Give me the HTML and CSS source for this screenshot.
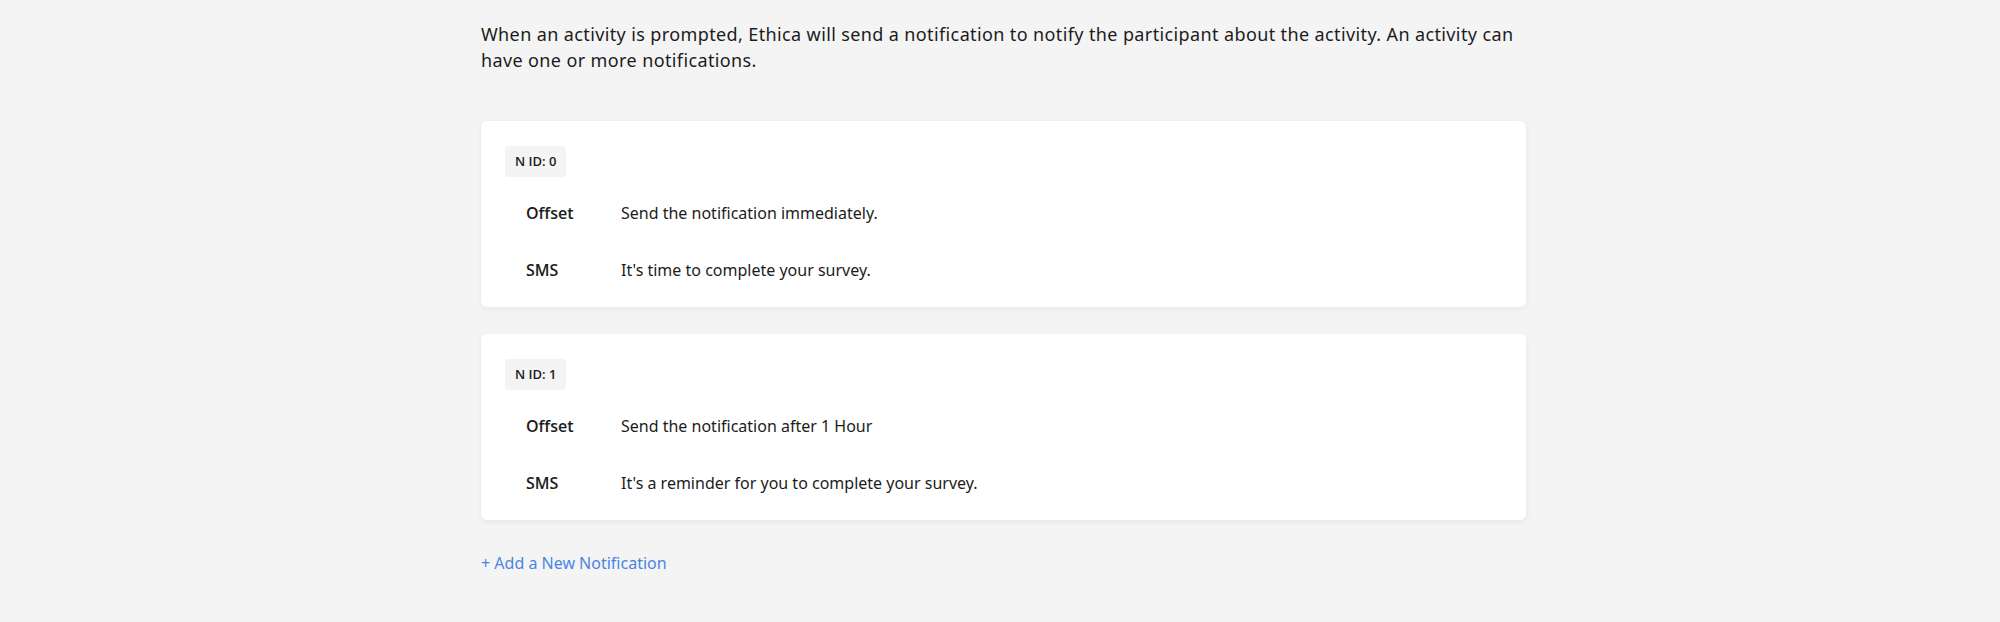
FILE: index.html
```html
<!DOCTYPE html>
<html lang="en">
<head>
<meta charset="utf-8">
<title>Notifications</title>
<link rel="stylesheet" href="styles.css">
</head>
<body>
<main class="page">
  <p class="intro">When an activity is prompted, Ethica will send a notification to notify the participant about the activity. An activity can have one or more notifications.</p>

  <section class="card">
    <div class="badge">N ID: 0</div>
    <div class="row">
      <div class="label">Offset</div>
      <div class="value">Send the notification immediately.</div>
    </div>
    <div class="row">
      <div class="label">SMS</div>
      <div class="value">It's time to complete your survey.</div>
    </div>
  </section>

  <section class="card">
    <div class="badge">N ID: 1</div>
    <div class="row">
      <div class="label">Offset</div>
      <div class="value">Send the notification after 1 Hour</div>
    </div>
    <div class="row">
      <div class="label">SMS</div>
      <div class="value">It's a reminder for you to complete your survey.</div>
    </div>
  </section>

  <a class="add-link" href="#">+ Add a New Notification</a>
</main>
</body>
</html>
```

FILE: styles.css
```css
html, body {
  margin: 0;
  padding: 0;
  background: #f4f4f4;
}

body {
  padding-left: 7px;
  font-family: "Noto Sans", "Open Sans", sans-serif;
  color: #1c1c1c;
}

.page {
  width: 1045px;
  margin: 0 auto;
  padding-top: 21px;
  display: flex;
  flex-direction: column;
  align-items: flex-start;
}

.intro {
  margin: 0 0 48px;
  font-size: 18px;
  line-height: 26px;
  letter-spacing: 0.38px;
}

.card {
  align-self: stretch;
  background: #ffffff;
  border-radius: 6px;
  box-shadow: 0 2px 6px rgba(0, 0, 0, 0.06);
  padding: 25px 24px 8px;
  margin-bottom: 27px;
  display: flex;
  flex-direction: column;
  align-items: flex-start;
}

.card + .card {
  margin-bottom: 31px;
}

.badge {
  background: #f4f4f4;
  border-radius: 3px;
  padding: 6px 10px;
  font-family: "Open Sans", "Noto Sans", sans-serif;
  font-size: 13px;
  line-height: 19px;
  font-weight: 600;
  margin-bottom: 8px;
}

.row {
  display: flex;
  padding: 16px 21px;
  font-size: 16px;
  line-height: 25px;
}

.label {
  width: 95px;
  flex: none;
  font-family: "Open Sans", "Noto Sans", sans-serif;
  font-weight: 600;
}

.value {
  flex: 1;
}

.add-link {
  font-size: 16px;
  line-height: 25px;
  color: #4a85e6;
  text-decoration: none;
}
```
